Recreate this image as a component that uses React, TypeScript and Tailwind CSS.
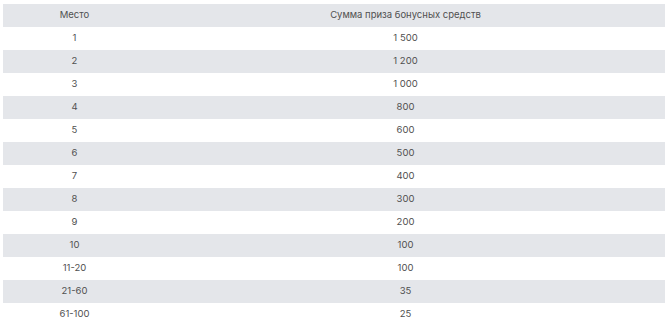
const rows: [string, string][] = [
  ["1", "1 500"],
  ["2", "1 200"],
  ["3", "1 000"],
  ["4", "800"],
  ["5", "600"],
  ["6", "500"],
  ["7", "400"],
  ["8", "300"],
  ["9", "200"],
  ["10", "100"],
  ["11-20", "100"],
  ["21-60", "35"],
  ["61-100", "25"],
];

export default function App() {
  return (
    <div className="w-[670px] h-[325px] bg-white overflow-hidden pt-[4px] pl-[3px]" style={{ fontFamily: "Inter, 'Noto Sans', sans-serif" }}>
      <div className="w-[662px] text-[9.5px] text-[#505050]">
        <div className="grid grid-cols-[143px_1fr] h-[23px] items-center bg-[#e4e6ea]">
          <div className="text-center">Место</div>
          <div className="text-center">Сумма приза бонусных средств</div>
        </div>
        {rows.map(([a, b], i) => (
          <div
            key={i}
            className={`grid grid-cols-[143px_1fr] h-[23px] items-center ${i % 2 === 1 ? "bg-[#e4e6ea]" : "bg-white"}`}
          >
            <div className="text-center">{a}</div>
            <div className="text-center">{b}</div>
          </div>
        ))}
      </div>
    </div>
  );
}
